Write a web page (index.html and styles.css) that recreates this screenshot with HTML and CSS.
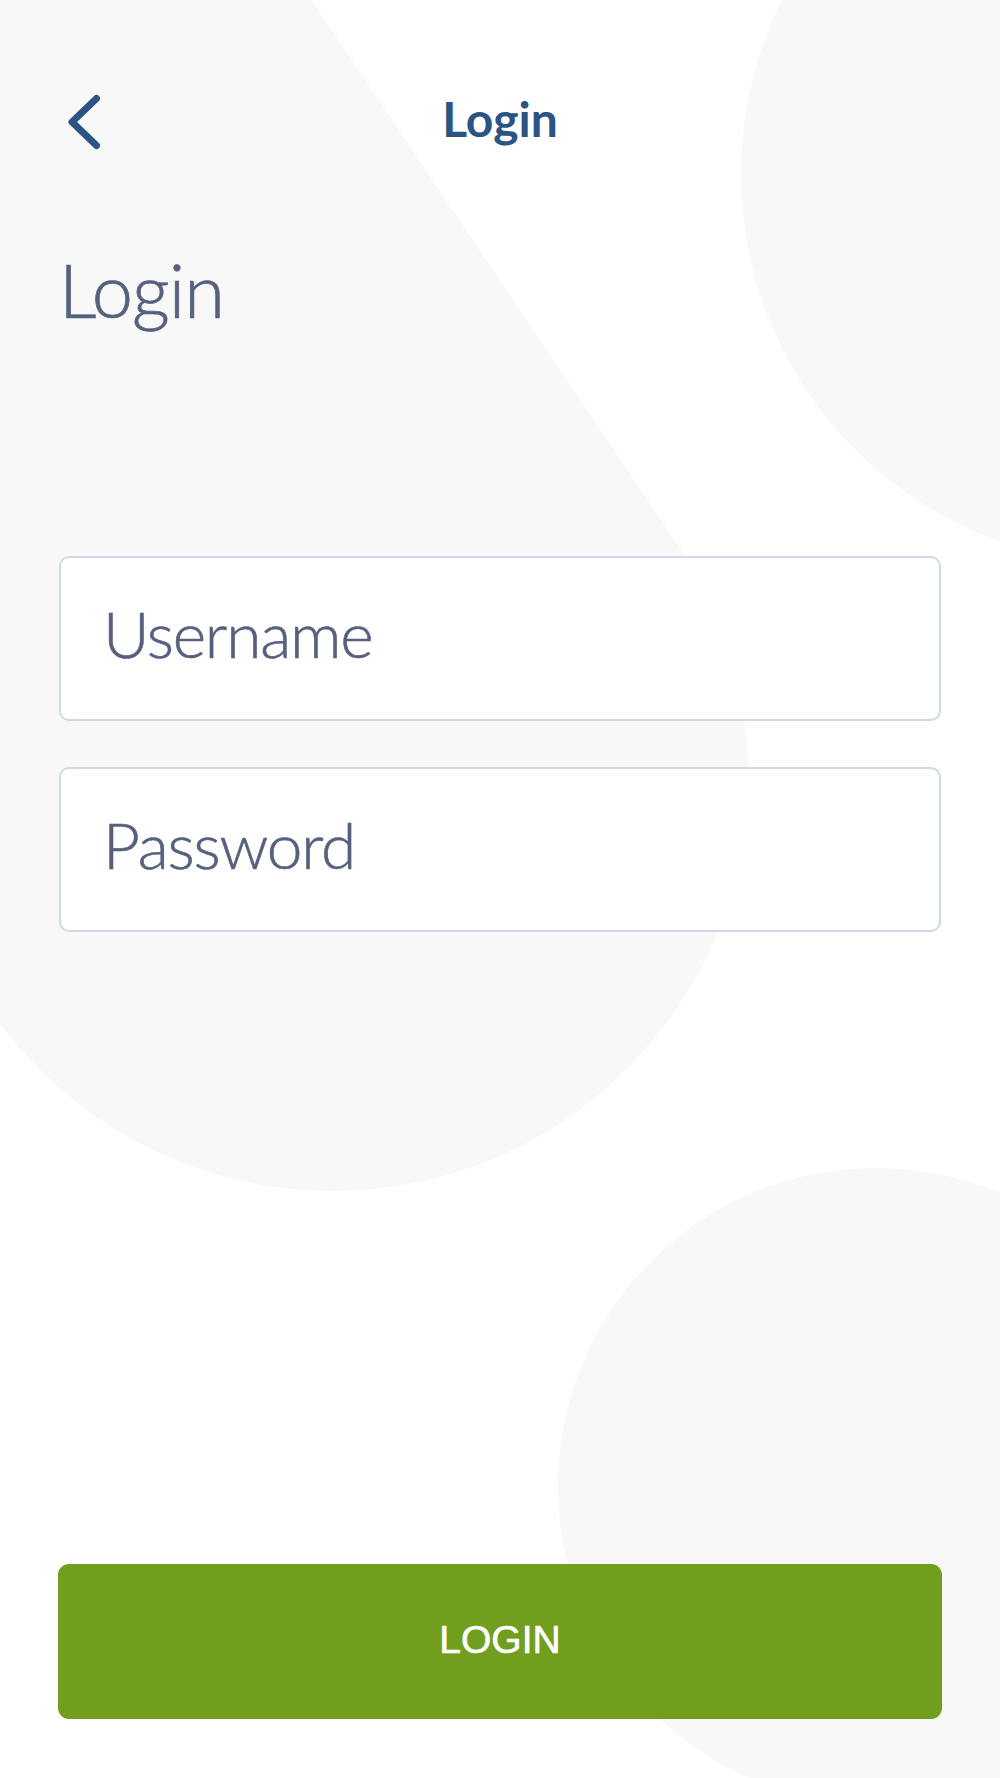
FILE: index.html
```html
<!DOCTYPE html>
<html lang="en">
<head>
<meta charset="utf-8">
<title>Login</title>
<link rel="stylesheet" href="styles.css">
</head>
<body>
<div class="screen">
  <svg class="bg" viewBox="0 0 1000 1778" width="1000" height="1778" aria-hidden="true">
    <path d="M 677.5 544.4 A 415 415 0 0 1 -11.5 1007.6 L -1127.5 -652.4 L -438.5 -1115.6 Z" fill="#f8f8f8"/>
    <circle cx="1131" cy="174" r="390" fill="#f8f8f8"/>
    <circle cx="876" cy="1486" r="318" fill="#f8f8f8"/>
  </svg>
  <div class="content">
    <header class="topbar">
      <div class="topbar-left">
        <svg class="back" viewBox="0 0 40 64" width="40" height="64" aria-hidden="true">
          <path d="M 36.5 8.5 L 12 32 L 36.5 55.5" fill="none" stroke="#2b5384" stroke-width="7" stroke-linecap="round" stroke-linejoin="round"/>
        </svg>
      </div>
      <div class="topbar-title">Login</div>
      <div class="topbar-right"></div>
    </header>
    <h1 class="heading">Login</h1>
    <div class="form">
      <label class="field"><span>Username</span></label>
      <label class="field"><span>Password</span></label>
    </div>
    <button class="login-btn" type="button">LOGIN</button>
  </div>
</div>
</body>
</html>
```

FILE: styles.css
```css
* { box-sizing: border-box; }
html, body { margin: 0; padding: 0; background: #ffffff; }
body { font-family: "Lato", "Noto Sans", sans-serif; }

.screen {
  position: relative;
  width: 1000px;
  height: 1778px;
  overflow: hidden;
  background: #ffffff;
}

.bg {
  position: absolute;
  left: 0;
  top: 0;
  display: block;
}

.content {
  position: relative;
  height: 1778px;
  display: flex;
  flex-direction: column;
  padding: 90px 59px 59px 59px;
}

.topbar {
  display: grid;
  grid-template-columns: 1fr auto 1fr;
  align-items: center;
  height: 64px;
  margin: 0 -59px;
}

.topbar-left { display: flex; align-items: center; padding-left: 60px; }
.back { display: block; }

.topbar-title {
  font-family: "Lato", sans-serif;
  font-weight: 700;
  font-size: 48px;
  line-height: 48px;
  padding-bottom: 7px;
  color: #2b5384;
}

.heading {
  margin: 99px 0 0 0;
  font-family: "Lato", sans-serif;
  font-weight: 300;
  font-size: 74px;
  line-height: 74px;
  letter-spacing: -1px;
  color: #56617d;
  -webkit-text-stroke: 0.7px #56617d;
}

.form {
  display: flex;
  flex-direction: column;
  gap: 46px;
  margin-top: 229px;
}

.field {
  display: block;
  background: #ffffff;
  border: 2px solid #cfd7ea;
  border-radius: 10px;
  padding: 44px 40px 53px 42px;
  font-family: "Lato", sans-serif;
  font-weight: 300;
  font-size: 64px;
  line-height: 64px;
  letter-spacing: -1.2px;
  color: #56617d;
  -webkit-text-stroke: 0.6px #56617d;
}
.field span { display: block; }

.login-btn {
  margin: auto -1px 0 -1px;
  display: block;
  border: 0;
  border-radius: 11px;
  background: #719e1c;
  color: #ffffff;
  -webkit-text-stroke: 0.6px #ffffff;
  font-family: "Liberation Sans", Arial, sans-serif;
  font-size: 39px;
  line-height: 39px;
  padding: 56px 0 60px 0;
  text-align: center;
  width: calc(100% + 2px);
}
```
